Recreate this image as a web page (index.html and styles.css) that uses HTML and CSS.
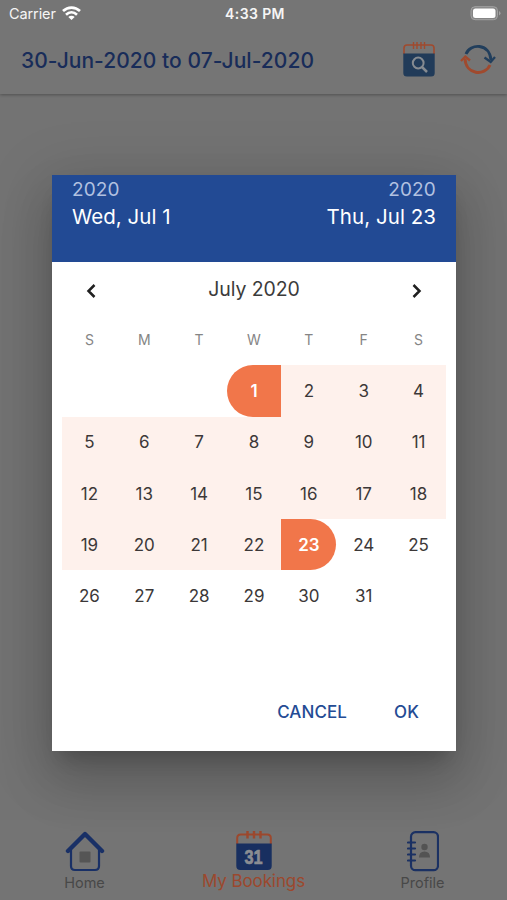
FILE: index.html
```html
<!DOCTYPE html>
<html lang="en">
<head>
<meta charset="utf-8">
<title>My Bookings</title>
<link rel="stylesheet" href="styles.css">
</head>
<body>
<div class="app">
  <header class="top">
    <div class="status">
      <div class="carrier"><span>Carrier</span>
        <svg width="19" height="15" viewBox="0 0 19 15" fill="none" stroke="#fff" stroke-width="2.7"><path d="M1 5.1C6 .4 13 .4 18 5.1M4 8.700c3.300-3 7.700-3 11 0"/><path d="M6.300 10.900c1.900-1.700 4.500-1.700 6.400 0L9.500 14z" fill="#fff" stroke="none"/></svg>
      </div>
      <span class="time">4:33 PM</span>
      <svg class="battery" width="31" height="15" viewBox="0 0 31 15"><rect x="1" y=".7" width="26.500" height="13" rx="4" fill="#858585" stroke="#a3a3a3"/><rect x="3" y="2.600" width="22.500" height="9.300" rx="2.500" fill="#fff"/><path d="M29 5v4.500q1.500-.6 1.500-2.200T29 5" fill="#a3a3a3"/></svg>
    </div>
    <div class="toolbar">
      <h1>30-Jun-2020 to 07-Jul-2020</h1>
      <svg class="search" width="32" height="36" viewBox="0 0 32 36"><path d="M1 12V6q0-3 3-3h24q3 0 3 3v6" fill="none" stroke="#a04a2e" stroke-width="1.600"/><path d="M10.500 0v7M14 0v7M18 0v7M21.500 0v7" stroke="#a04a2e" stroke-width="1.400"/><path d="M.3 11.500h31.400V31q0 3.600-3.600 3.600H3.900Q.3 34.600.3 31z" fill="#213b59"/><circle cx="15.200" cy="21" r="5.400" fill="none" stroke="#868b91" stroke-width="2"/><path d="m19 25 5 5" stroke="#868b91" stroke-width="2.500"/></svg>
      <svg class="refresh" width="36" height="32" viewBox="0 0 36 32" fill="none" stroke-width="2.900"><path d="M6 10C10-.5 29.500-1.500 31 16" stroke="#213e5c"/><path d="m24.500 13.500 6.200 4.500 4.300-5" stroke="#213e5c" stroke-width="2.300"/><path d="M30 21C25 32.500 5.500 31 5 14.500" stroke="#a04a2e"/><path d="m1 17 4.300-4.500L10 16.500" stroke="#a04a2e" stroke-width="2.300"/></svg>
    </div>
  </header>
  <main class="content"></main>
  <nav class="nav">
    <a class="tab"><svg width="40" height="41" viewBox="0 0 40 41" fill="none" stroke="#193066"><path d="M6 19v16q0 4 4 4h20q4 0 4-4V19" stroke-width="2.200"/><path d="M3 20 20 3l17 17" stroke-width="4.400" stroke-linecap="round" stroke-linejoin="round"/><rect x="14.500" y="20.500" width="11" height="11" rx="1" fill="#555" stroke="none"/></svg><span>Home</span></a>
    <a class="tab active"><svg width="36" height="40" viewBox="0 0 36 40"><path d="M1.200 13V7q0-3.500 3.500-3.500h26.600q3.500 0 3.500 3.500v6" fill="none" stroke="#9c482d" stroke-width="2"/><path d="M11.500 0v7.500M18 0v7.500M24.500 0v7.500" stroke="#9c482d" stroke-width="2.400"/><path d="M.3 12.500h35.400V35q0 4-4 4H4.300q-4 0-4-4z" fill="#182f60"/><text x="17.500" y="33" text-anchor="middle" textLength="18" lengthAdjust="spacingAndGlyphs" class="day-number">31</text></svg><span>My Bookings</span></a>
    <a class="tab"><svg width="32" height="41" viewBox="0 0 32 41" fill="none" stroke="#1b3163"><rect x="4" y="1.200" width="27" height="38" rx="4.500" stroke-width="2.200"/><path d="M1 11.500h7M1 17.500h7M1 23.500h7M1 29.500h7" stroke-width="2.200" stroke-linecap="round"/><circle cx="17.500" cy="16" r="3.200" fill="#535353" stroke="none"/><path d="M12 26.500q0-6 5.500-6t5.500 6z" fill="#535353" stroke="none"/></svg><span>Profile</span></a>
  </nav>
</div>
<section class="dialog" role="dialog">
  <header class="range">
    <div><span class="year">2020</span><span class="date">Wed, Jul 1</span></div>
    <div class="end-date"><span class="year">2020</span><span class="date">Thu, Jul 23</span></div>
  </header>
  <div class="month">
    <svg width="12" height="16" viewBox="0 0 12 16"><path d="M9.500 2 3.500 8l6 6"/></svg>
    <h2>July 2020</h2>
    <svg width="12" height="16" viewBox="0 0 12 16"><path d="m2.500 2 6 6-6 6"/></svg>
  </div>
  <div class="calendar">
    <span class="week">S</span><span class="week">M</span><span class="week">T</span><span class="week">W</span><span class="week">T</span><span class="week">F</span><span class="week">S</span>
    <i></i><i></i><i></i><b class="start">1</b><span class="in">2</span><span class="in">3</span><span class="in">4</span>
    <span class="in">5</span><span class="in">6</span><span class="in">7</span><span class="in">8</span><span class="in">9</span><span class="in">10</span><span class="in">11</span>
    <span class="in">12</span><span class="in">13</span><span class="in">14</span><span class="in">15</span><span class="in">16</span><span class="in">17</span><span class="in">18</span>
    <span class="in">19</span><span class="in">20</span><span class="in">21</span><span class="in">22</span><b class="end">23</b><span>24</span><span>25</span>
    <span>26</span><span>27</span><span>28</span><span>29</span><span>30</span><span>31</span>
  </div>
  <footer class="actions"><button>CANCEL</button><button>OK</button></footer>
</section>
</body>
</html>
```

FILE: styles.css
```css
* { box-sizing: border-box; }
body { margin: 0; font-family: Inter, "Liberation Sans", sans-serif; }
h1, h2 { margin: 0; }
.app { height: 900px; display: flex; flex-direction: column; background: #737373; }
.top { height: 94px; background: #757575; box-shadow: 0 1px 3px rgba(0,0,0,.3); }
.status { height: 28px; padding: 0 6px 0 9px; display: grid; grid-template-columns: 1fr auto 1fr; align-items: center; color: #f5f5f5; }
.carrier { display: flex; align-items: center; gap: 6px; font-size: 14.5px; letter-spacing: -.1px; margin-top: -1px; }
.carrier svg { margin-top: -1px; }
.time { font-size: 14px; font-weight: 600; letter-spacing: .4px; margin-top: -1px; }
.battery { justify-self: end; margin-top: -2px; }
.toolbar { height: 64px; display: flex; align-items: center; padding: 0 11px 0 21px; }
h1 { width: 382px; font-size: 21px; font-weight: 500; letter-spacing: .05px; color: #182c59; white-space: nowrap; }
.refresh { margin-left: auto; }
.content { flex: 1; }
.nav { height: 80px; padding-top: 11px; display: grid; grid-template-columns: repeat(3, 1fr); background: #747474; }
.tab { display: flex; flex-direction: column; align-items: center; font-size: 14.5px; letter-spacing: 0; line-height: 22px; color: #484848; }
.tab svg { flex: none; }
.active { font-size: 17px; letter-spacing: -.1px; line-height: 21px; color: #9c482d; }
.day-number { font: bold 21px "Liberation Sans", sans-serif; fill: #8b8d92; stroke: #8b8d92; stroke-width: .7px; }
.dialog { position: absolute; left: 52px; top: 175px; width: 404px; height: 576px; background: #fff; box-shadow: 0 14px 19px -9px rgba(0,0,0,.2), 0 30px 48px 4px rgba(0,0,0,.14), 0 11px 58px 10px rgba(0,0,0,.12); }
.range { height: 87px; padding: 2px 20px; display: flex; justify-content: space-between; background: #224a94; color: #fff; }
.range div { display: flex; flex-direction: column; }
.end-date { align-items: flex-end; }
.year { font-size: 19px; line-height: 25px; letter-spacing: .15px; color: #b2c1e0; }
.date { font-size: 20.5px; line-height: 30px; letter-spacing: .05px; }
.month { height: 52px; padding: 6px 33px 0; display: flex; justify-content: space-between; align-items: center; }
.month svg { fill: none; stroke: #202020; stroke-width: 2.500; }
h2 { font-size: 19.5px; font-weight: 400; letter-spacing: -.1px; color: #3b3b3b; margin-top: -5px; }
.calendar { padding: 0 10px; display: grid; grid-template-columns: repeat(7, 1fr); grid-auto-rows: 51.300px; }
.calendar > * { display: flex; align-items: center; justify-content: center; font-size: 17px; color: #3c3838; }
.calendar .week { font-size: 14px; color: #858585; padding-bottom: 1px; }
.calendar .in { background: #fef1ec; }
.calendar b { background: #f1764a; color: #fff; font-weight: 600; }
.start { border-radius: 26px 0 0 26px; }
.end { border-radius: 0 26px 26px 0; }
.actions { margin-top: 70px; padding-right: 37px; height: 40px; display: flex; justify-content: flex-end; align-items: center; gap: 47px; }
button { padding: 0; border: 0; background: none; font: 500 17px Inter, sans-serif; color: #244b94; letter-spacing: .1px; }
```
